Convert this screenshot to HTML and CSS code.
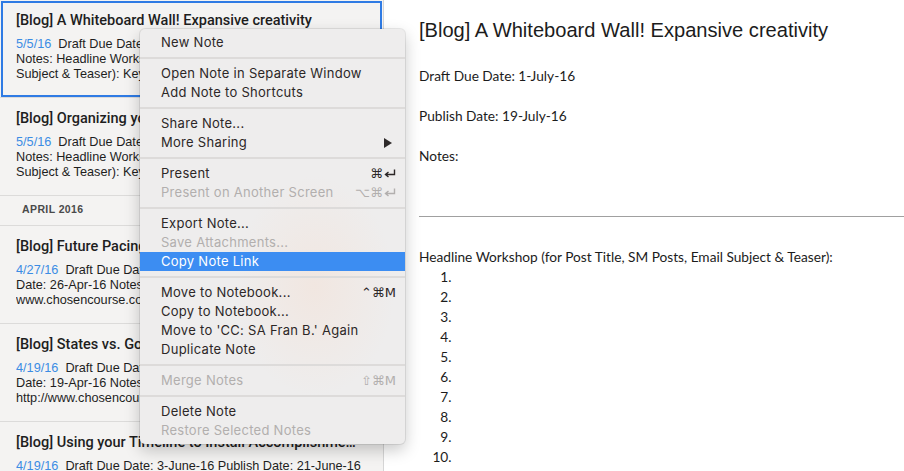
FILE: index.html
```html
<!DOCTYPE html>
<html lang="en">
  <head>
    <meta charset="UTF-8" />
    <meta name="viewport" content="width=device-width, initial-scale=1.0" />
    <title>Notes - Context Menu</title>

    <!-- CSS -->
    <link rel="stylesheet" href="styles.css">
  </head>
  <body>
    <div class="app">
      <!-- Note list -->
      <aside class="note-list">
        <div class="note is-selected">
          <h3 class="note-title">[Blog] A Whiteboard Wall! Expansive creativity</h3>
          <p class="note-snippet"><span class="note-date">5/5/16</span>&nbsp; Draft Due Date: 1-July-16 Publish Date: 19-July-16<br>Notes: Headline Workshop (for Post Title, SM Posts, Email<br>Subject &amp; Teaser): Keywords: Bullet Outline: Draft:</p>
        </div>

        <div class="note">
          <h3 class="note-title">[Blog] Organizing your Calendar</h3>
          <p class="note-snippet"><span class="note-date">5/5/16</span>&nbsp; Draft Due Date: 24-June-16 Publish Date: 5-July-16<br>Notes: Headline Workshop (for Post Title, SM Posts, Email<br>Subject &amp; Teaser): Keywords: Bullet Outline: Draft:</p>
        </div>

        <div class="month">April 2016</div>

        <div class="note">
          <h3 class="note-title">[Blog] Future Pacing your Goals</h3>
          <p class="note-snippet"><span class="note-date">4/27/16</span>&nbsp; Draft Due Date: 20-Apr-16 Publish<br>Date: 26-Apr-16 Notes: Link to this blog post: http://<br>www.chosencourse.com/blog/future-pacing</p>
        </div>

        <div class="note">
          <h3 class="note-title">[Blog] States vs. Goals</h3>
          <p class="note-snippet"><span class="note-date">4/19/16</span>&nbsp; Draft Due Date: 14-Apr-16 Publish<br>Date: 19-Apr-16 Notes: Link to this blog post:<br>http://www.chosencourse.com/blog/states-vs-goals</p>
        </div>

        <div class="note">
          <h3 class="note-title">[Blog] Using your Timeline to Install Accomplishments</h3>
          <p class="note-snippet"><span class="note-date">4/19/16</span>&nbsp; Draft Due Date: 3-June-16 Publish Date: 21-June-16<br>Notes: Headline Workshop (for Post Title, SM Posts, Email</p>
        </div>
      </aside>

      <!-- Editor -->
      <main class="editor">
        <h1 class="editor-title">[Blog] A Whiteboard Wall! Expansive creativity</h1>
        <div class="editor-body">
          <p>Draft Due Date: 1-July-16</p>
          <p>Publish Date: 19-July-16</p>
          <p>Notes:</p>
          <hr>
          <p class="no-gap">Headline Workshop (for Post Title, SM Posts, Email Subject &amp; Teaser):</p>
          <ol>
            <li></li>
            <li></li>
            <li></li>
            <li></li>
            <li></li>
            <li></li>
            <li></li>
            <li></li>
            <li></li>
            <li></li>
          </ol>
        </div>
      </main>

      <!-- Context menu -->
      <div class="context-menu">
        <div class="menu-item">New Note</div>
        <div class="menu-sep"></div>
        <div class="menu-item">Open Note in Separate Window</div>
        <div class="menu-item">Add Note to Shortcuts</div>
        <div class="menu-sep"></div>
        <div class="menu-item">Share Note...</div>
        <div class="menu-item">More Sharing
          <svg class="submenu-arrow" width="8" height="10" viewBox="0 0 8 10"><polygon points="0,0 8,5 0,10" fill="#2e2a2a"/></svg>
        </div>
        <div class="menu-sep"></div>
        <div class="menu-item">Present
          <span class="shortcut">&#8984;<svg width="12" height="10" viewBox="0 0 12 10"><path d="M10.5 0.5 V5.5 H2 M4.5 3 L1.5 5.5 L4.5 8" fill="none" stroke="currentColor" stroke-width="1.4"/></svg></span>
        </div>
        <div class="menu-item is-disabled">Present on Another Screen
          <span class="shortcut">&#8997;&#8984;<svg width="12" height="10" viewBox="0 0 12 10"><path d="M10.5 0.5 V5.5 H2 M4.5 3 L1.5 5.5 L4.5 8" fill="none" stroke="currentColor" stroke-width="1.4"/></svg></span>
        </div>
        <div class="menu-sep"></div>
        <div class="menu-item">Export Note...</div>
        <div class="menu-item is-disabled">Save Attachments...</div>
        <div class="menu-item is-active">Copy Note Link</div>
        <div class="menu-sep"></div>
        <div class="menu-item">Move to Notebook... <span class="shortcut">&#8963;&#8984;M</span></div>
        <div class="menu-item">Copy to Notebook...</div>
        <div class="menu-item">Move to 'CC: SA Fran B.' Again</div>
        <div class="menu-item">Duplicate Note</div>
        <div class="menu-sep"></div>
        <div class="menu-item is-disabled">Merge Notes <span class="shortcut">&#8679;&#8984;M</span></div>
        <div class="menu-sep"></div>
        <div class="menu-item">Delete Note</div>
        <div class="menu-item is-disabled">Restore Selected Notes</div>
      </div>
    </div>
  </body>
</html>
```

FILE: styles.css
```css
* {
  box-sizing: border-box;
}

body {
  margin: 0;
  background: #fff;
}

.app {
  position: relative;
  display: grid;
  grid-template-columns: 384px minmax(0, 1fr);
  height: 471px;
  overflow: hidden;
}

/* Note list */

.note-list {
  min-width: 0;
  overflow: hidden;
  background: #f4f3f2;
  border-right: 1px solid #d6d6d6;
  font-family: "Liberation Sans", Arial, sans-serif;
  color: #1e1e1e;
}

.note {
  height: 98px;
  padding: 12px 22px 0 16px;
  border-bottom: 1px solid #dcdbda;
}

.note.is-selected {
  outline: 2px solid #2f7be4;
  outline-offset: -3px;
}

.note-title {
  margin: 0 0 7px;
  font-family: Roboto, sans-serif;
  font-weight: 500;
  font-size: 14.5px;
  line-height: 18px;
  white-space: nowrap;
  overflow: hidden;
  text-overflow: ellipsis;
}

.note-snippet {
  margin: 0;
  font-size: 12.7px;
  line-height: 15px;
  white-space: nowrap;
  overflow: hidden;
}

.note-date {
  color: #3b8ce4;
}

.month {
  height: 30px;
  padding: 7px 22px 0;
  border-bottom: 1px solid #dcdbda;
  font-size: 10.5px;
  line-height: 12px;
  font-weight: bold;
  letter-spacing: 0.4px;
  text-transform: uppercase;
  color: #4a4a4a;
}

/* Editor */

.editor {
  padding-left: 35px;
  color: #1c1c1c;
}

.editor-title {
  margin: 18px 0 24px;
  font-family: "Liberation Sans", Arial, sans-serif;
  font-weight: normal;
  font-size: 20.1px;
  line-height: 24px;
  white-space: nowrap;
}

.editor-body {
  font-family: Lato, sans-serif;
  font-size: 13.7px;
  line-height: 20px;
}

.editor-body p {
  margin: 0 0 20px;
}

.editor-body p.no-gap {
  margin: 0;
}

.editor-body hr {
  margin: 50px 0 30px;
  border: 0;
  border-top: 1px solid #a0a0a0;
}

.editor-body ol {
  margin: 0;
  padding-left: 36px;
}

.editor-body li {
  height: 20px;
}

/* Context menu */

.context-menu {
  position: absolute;
  left: 140px;
  top: 29px;
  width: 265px;
  padding: 4px 0;
  border-radius: 5px;
  background:
    radial-gradient(ellipse 80px 110px at 66% 62%, rgba(244, 224, 212, 0.5), rgba(244, 224, 212, 0)),
    #eeeded;
  box-shadow: 0 0 0 1px rgba(0, 0, 0, 0.08), 0 6px 16px rgba(0, 0, 0, 0.22);
  font-family: Inter, sans-serif;
  font-size: 13px;
  letter-spacing: 0.28px;
  color: #2c2727;
}

.menu-item {
  display: flex;
  align-items: center;
  justify-content: space-between;
  height: 19px;
  padding: 0 9px 0 21px;
  line-height: 19px;
  white-space: nowrap;
}

.menu-item.is-disabled {
  color: #b2afae;
}

.menu-item.is-active {
  background: #3c8df2;
  color: #fff;
}

.menu-sep {
  height: 2px;
  margin: 5px 0;
  background: #dddbda;
}

.submenu-arrow {
  margin-right: 4px;
}

.shortcut {
  display: flex;
  align-items: center;
  gap: 1px;
  font-family: "DejaVu Sans", sans-serif;
  font-size: 13px;
  letter-spacing: 0;
}
```
